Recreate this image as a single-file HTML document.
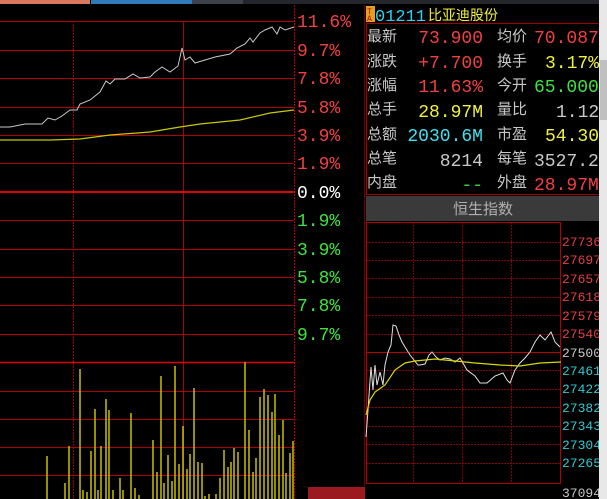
<!DOCTYPE html>
<html><head><meta charset="utf-8"><style>
html,body{margin:0;padding:0;background:#000;width:607px;height:499px;overflow:hidden}
svg{display:block}
text{font-family:"Liberation Mono","Noto Sans CJK SC",monospace}
.c{font-family:"Liberation Sans","Noto Sans CJK SC",sans-serif}
</style></head><body>
<svg width="607" height="499" viewBox="0 0 607 499" xmlns="http://www.w3.org/2000/svg">
<rect width="607" height="499" fill="#000"/>
<rect x="0" y="0" width="90" height="4" fill="#d9785c"/>
<rect x="91" y="0" width="101" height="4" fill="#2f7ab8"/>
<rect x="192" y="0" width="51" height="4" fill="#3d4149"/>
<rect x="243" y="0" width="364" height="4" fill="#23262b"/>
<g stroke="#b00000" stroke-width="1">
<line x1="0" y1="21.5" x2="294" y2="21.5"/><line x1="0" y1="50.5" x2="294" y2="50.5"/>
<line x1="0" y1="78.5" x2="294" y2="78.5"/><line x1="0" y1="107.5" x2="294" y2="107.5"/>
<line x1="0" y1="135.5" x2="294" y2="135.5"/><line x1="0" y1="163.5" x2="294" y2="163.5"/>
<line x1="0" y1="220.5" x2="294" y2="220.5"/><line x1="0" y1="249.5" x2="294" y2="249.5"/>
<line x1="0" y1="277.5" x2="294" y2="277.5"/><line x1="0" y1="305.5" x2="294" y2="305.5"/>
<line x1="0" y1="334.5" x2="294" y2="334.5"/>
<line x1="0" y1="391.5" x2="294" y2="391.5"/><line x1="0" y1="419.5" x2="294" y2="419.5"/>
<line x1="0" y1="447.5" x2="294" y2="447.5"/><line x1="0" y1="475.5" x2="294" y2="475.5"/>
<line x1="183.5" y1="21" x2="183.5" y2="499"/>
</g>
<line x1="73.5" y1="21" x2="73.5" y2="499" stroke="#a00000" stroke-dasharray="2,1"/>
<line x1="294.5" y1="5" x2="294.5" y2="499" stroke="#c00000" stroke-dasharray="2,1"/>
<line x1="0" y1="192" x2="294" y2="192" stroke="#e00000" stroke-width="2"/>
<line x1="0" y1="362.5" x2="294" y2="362.5" stroke="#e00000" stroke-width="1.5"/>
<polyline fill="none" stroke="#c8c8c8" stroke-width="1" points="0,127 10,127 25,124 42,124 48,118 55,120 62,116 70,110 77,110 80,104 90,100 100,92 106,81 110,84 115,79 125,79 133,74 140,78 150,77 155,72 162,67 170,72 178,66 182,48 185,60 190,57 195,63 205,60 215,57 230,54 237,48 245,44 250,38 253,42 260,33 265,30 272,27 277,34 280,27 285,30 294,27"/>
<polyline fill="none" stroke="#c8c800" stroke-width="1.3" points="0,140 50,140 80,139 110,135 150,132 180,127 200,124 240,120 270,113 294,110"/>
<g stroke="#c8c000" stroke-width="1.5">
<line x1="47" y1="456" x2="47" y2="499"/><line x1="65" y1="483" x2="65" y2="499"/><line x1="69" y1="446" x2="69" y2="499"/>
<line x1="80" y1="369" x2="80" y2="499"/><line x1="83" y1="490" x2="83" y2="499"/><line x1="87" y1="492" x2="87" y2="499"/>
<line x1="91" y1="451" x2="91" y2="499"/><line x1="95" y1="409" x2="95" y2="499"/><line x1="98" y1="490" x2="98" y2="499"/>
<line x1="101" y1="446" x2="101" y2="499"/><line x1="106" y1="399" x2="106" y2="499"/><line x1="109" y1="410" x2="109" y2="499"/>
<line x1="113" y1="490" x2="113" y2="499"/><line x1="120" y1="478" x2="120" y2="499"/><line x1="123" y1="490" x2="123" y2="499"/>
<line x1="131" y1="413" x2="131" y2="499"/><line x1="135" y1="488" x2="135" y2="499"/><line x1="139" y1="495" x2="139" y2="499"/>
<line x1="153" y1="440" x2="153" y2="499"/><line x1="157" y1="472" x2="157" y2="499"/><line x1="161" y1="376" x2="161" y2="499"/>
<line x1="164" y1="483" x2="164" y2="499"/><line x1="168" y1="455" x2="168" y2="499"/><line x1="172" y1="481" x2="172" y2="499"/>
<line x1="175" y1="366" x2="175" y2="499"/><line x1="179" y1="464" x2="179" y2="499"/><line x1="183" y1="426" x2="183" y2="499"/>
<line x1="187" y1="469" x2="187" y2="499"/><line x1="190" y1="454" x2="190" y2="499"/><line x1="194" y1="388" x2="194" y2="499"/>
<line x1="198" y1="462" x2="198" y2="499"/><line x1="202" y1="463" x2="202" y2="499"/><line x1="205" y1="496" x2="205" y2="499"/>
<line x1="209" y1="494" x2="209" y2="499"/><line x1="216" y1="494" x2="216" y2="499"/><line x1="220" y1="478" x2="220" y2="499"/>
<line x1="224" y1="450" x2="224" y2="499"/><line x1="228" y1="467" x2="228" y2="499"/><line x1="231" y1="462" x2="231" y2="499"/>
<line x1="234" y1="448" x2="234" y2="499"/><line x1="238" y1="452" x2="238" y2="499"/><line x1="245" y1="362" x2="245" y2="499"/>
<line x1="249" y1="430" x2="249" y2="499"/><line x1="253" y1="472" x2="253" y2="499"/><line x1="256" y1="458" x2="256" y2="499"/>
<line x1="260" y1="397" x2="260" y2="499"/><line x1="264" y1="389" x2="264" y2="499"/><line x1="268" y1="395" x2="268" y2="499"/>
<line x1="272" y1="412" x2="272" y2="499"/><line x1="275" y1="394" x2="275" y2="499"/><line x1="279" y1="435" x2="279" y2="499"/>
<line x1="283" y1="420" x2="283" y2="499"/><line x1="286" y1="473" x2="286" y2="499"/><line x1="290" y1="453" x2="290" y2="499"/>
<line x1="293" y1="441" x2="293" y2="499"/>
</g>
<g font-size="18" fill="#f04040">
<text x="297" y="27">11.6%</text><text x="297" y="56">9.7%</text><text x="297" y="84">7.8%</text>
<text x="297" y="113">5.8%</text><text x="297" y="141">3.9%</text><text x="297" y="169">1.9%</text>
</g>
<text x="297" y="198" font-size="18" fill="#ffffff">0.0%</text>
<g font-size="18" fill="#40e040">
<text x="297" y="226">1.9%</text><text x="297" y="255">3.9%</text><text x="297" y="283">5.8%</text>
<text x="297" y="311">7.8%</text><text x="297" y="340">9.7%</text>
</g>
<rect x="308" y="487" width="57" height="12" fill="#9b1a20"/>
<line x1="364.5" y1="5" x2="364.5" y2="499" stroke="#700000"/>
<rect x="366" y="6" width="9" height="16" fill="#e0a020"/>
<text x="367" y="14" font-size="8" fill="#c00000">T</text><text x="367" y="21" font-size="8" fill="#c00000">A</text>
<text x="375" y="21" font-size="17" fill="#30d0f0">01211</text>
<text x="428" y="20" font-size="14" fill="#f0f040" class="c">比亚迪股份</text>
<rect x="366.5" y="23.5" width="240" height="171" fill="none" stroke="#a00000"/>
<g font-size="15" class="c" fill="#c8c8c8">
<text x="367" y="41">最新</text><text x="367" y="66">涨跌</text><text x="367" y="90">涨幅</text><text x="367" y="114">总手</text>
<text x="367" y="139">总额</text><text x="367" y="163">总笔</text><text x="367" y="187">内盘</text>
<text x="497" y="41">均价</text><text x="497" y="66">换手</text><text x="497" y="90">今开</text><text x="497" y="114">量比</text>
<text x="497" y="139">市盈</text><text x="497" y="163">每笔</text><text x="497" y="187">外盘</text>
</g>
<g font-size="18" text-anchor="end">
<text x="483" y="43" fill="#f04040">73.900</text><text x="483" y="68" fill="#f04040">+7.700</text>
<text x="483" y="92" fill="#f04040">11.63%</text><text x="483" y="117" fill="#f0f040">28.97M</text>
<text x="483" y="141" fill="#40e0f0">2030.6M</text><text x="483" y="166" fill="#c8c8c8">8214</text>
<text x="483" y="190" fill="#40d040">--</text>
</g>
<g font-size="18">
<text x="534" y="43" fill="#f04040">70.087</text><text x="545" y="68" fill="#f0f040">3.17%</text>
<text x="534" y="92" fill="#40e040">65.000</text><text x="556" y="117" fill="#c8c8c8">1.12</text>
<text x="545" y="141" fill="#f0f040">54.30</text><text x="534" y="166" fill="#c8c8c8">3527.2</text>
<text x="534" y="190" fill="#f04040">28.97M</text>
</g>
<rect x="366" y="196" width="233" height="25" fill="#3a3a3a"/>
<text x="483" y="214" font-size="15" class="c" fill="#b0b0b0" text-anchor="middle">恒生指数</text>
<g stroke="#8a0000" stroke-dasharray="2,1">
<line x1="366" y1="242.5" x2="561" y2="242.5"/><line x1="366" y1="260.5" x2="561" y2="260.5"/>
<line x1="366" y1="278.5" x2="561" y2="278.5"/><line x1="366" y1="297.5" x2="561" y2="297.5"/>
<line x1="366" y1="315.5" x2="561" y2="315.5"/><line x1="366" y1="334.5" x2="561" y2="334.5"/>
<line x1="366" y1="370.5" x2="561" y2="370.5"/><line x1="366" y1="389.5" x2="561" y2="389.5"/>
<line x1="366" y1="407.5" x2="561" y2="407.5"/><line x1="366" y1="426.5" x2="561" y2="426.5"/>
<line x1="366" y1="444.5" x2="561" y2="444.5"/><line x1="366" y1="463.5" x2="561" y2="463.5"/>
<line x1="413.5" y1="222" x2="413.5" y2="483"/><line x1="462.5" y1="222" x2="462.5" y2="483"/>
<line x1="511.5" y1="222" x2="511.5" y2="483"/>
</g>
<line x1="366" y1="352.5" x2="561" y2="352.5" stroke="#c00000"/>
<rect x="366.5" y="222.5" width="194" height="261" fill="none" stroke="#b00000"/>
<polyline fill="none" stroke="#e0e0e0" stroke-width="1" points="366,437 368,410 371,367 373,390 375,365 377,385 380,372 383,385 385,365 388,352 391,345 393,325 396,326 399,335 402,342 405,347 410,355 414,360 418,365 420,365 425,364 429,355 432,352 436,357 440,360 445,358 450,359 455,362 460,358 467,370 475,376 480,383 487,383 495,376 503,373 507,380 510,383 515,370 520,363 525,358 530,352 535,342 540,335 545,340 551,332 555,342 560,347"/>
<polyline fill="none" stroke="#d8d800" stroke-width="1.2" points="366,415 370,400 375,392 385,385 395,370 405,363 415,361 435,359 455,361 475,363 500,365 520,366 540,363 561,362"/>
<g font-size="13" fill="#e04040">
<text x="562" y="246">27736</text><text x="562" y="264">27697</text><text x="562" y="283">27657</text>
<text x="562" y="301">27618</text><text x="562" y="320">27579</text><text x="562" y="338">27540</text>
</g>
<text x="562" y="357" font-size="13" fill="#c8c8c8">27500</text>
<g font-size="13" fill="#30c8d0">
<text x="562" y="375">27461</text><text x="562" y="393">27422</text><text x="562" y="412">27382</text>
<text x="562" y="430">27343</text><text x="562" y="449">27304</text><text x="562" y="467">27265</text>
</g>
<text x="562" y="497" font-size="13" fill="#c8c8c8">37094</text>
<rect x="360" y="487" width="5" height="12" fill="#9b1a20"/>
<rect x="599" y="0" width="8" height="499" fill="#e8e8e8"/>
<rect x="600" y="60" width="7" height="60" fill="#c0c0c0"/>
</svg>
</body></html>
